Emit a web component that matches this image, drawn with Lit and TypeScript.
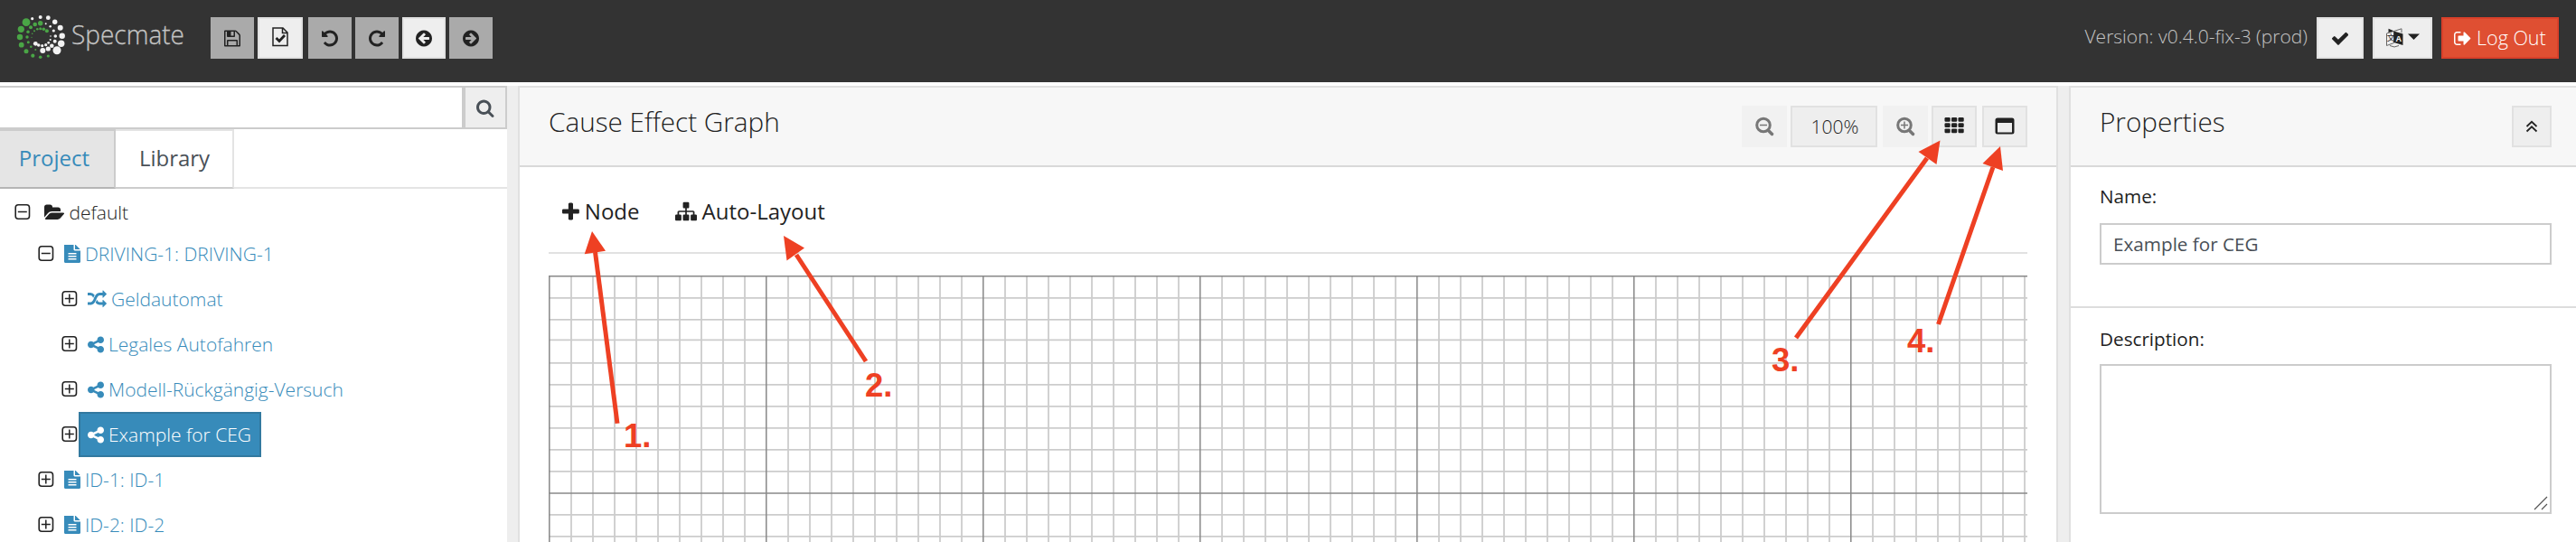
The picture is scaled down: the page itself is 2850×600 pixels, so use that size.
import { LitElement, html, svg, css, nothing } from "lit";
import { customElement } from "lit/decorators.js";

type Glyph = { w: number; d: string };
// Glyph outlines are drawn in a 1792-unit em with the y axis pointing down.
const G: Record<string, Glyph> = {
  undo: { w: 1536, d: "M1536 896q0 156-61 298t-164 245-245 164-298 61q-172 0-327-72.500t-264-204.500q-7-10-6.500-22.500t8.500-20.500l137-138q10-9 25-9 16 2 23 12 73 95 179 147t225 52q104 0 198.500-40.500t163.500-109.500 109.500-163.500 40.500-198.500-40.500-198.500-109.500-163.500-163.500-109.500-198.500-40.500q-98 0-188 35.500t-160 101.500l137 138q31 30 14 69-17 40-59 40h-448q-26 0-45-19t-19-45v-448q0-42 40-59 39-17 69 14l130 129q107-101 244.500-156.500t284.500-55.500q156 0 298 61t245 164 164 245 61 298z" },
  left: { w: 1536, d: "M1280 960v-128q0-26-19-45t-45-19h-502l189-189q19-19 19-45t-19-45l-91-91q-18-18-45-18t-45 18l-362 362-91 91q-18 18-18 45t18 45l91 91 362 362q18 18 45 18t45-18l91-91q18-18 18-45t-18-45l-189-189h502q26 0 45-19t19-45zM1536 896q0 209-103 385.500t-279.500 279.500-385.500 103-385.500-103-279.500-279.500-103-385.500 103-385.500 279.500-279.500 385.500-103 385.500 103 279.500 279.500 103 385.500z" },
  floppy: { w: 1536, d: "M384 1536h768v-384h-768v384zM1280 1536h128v-896q0-14-10-38.500t-20-34.500l-281-281q-10-10-34-20t-39-10v416q0 40-28 68t-68 28h-576q-40 0-68-28t-28-68v-416h-128v1280h128v-416q0-40 28-68t68-28h832q40 0 68 28t28 68v416zM896 608v-320q0-13-9.500-22.500t-22.500-9.500h-192q-13 0-22.500 9.500t-9.500 22.500v320q0 13 9.500 22.500t22.500 9.500h192q13 0 22.500-9.500t9.500-22.500zM1536 640v928q0 40-28 68t-68 28h-1344q-40 0-68-28t-28-68v-1344q0-40 28-68t68-28h928q40 0 88 20t76 48l280 280q28 28 48 76t20 88z" },
  search: { w: 1664, d: "M1152 832q0-185-131.500-316.500t-316.500-131.500-316.500 131.500-131.500 316.500 131.500 316.500 316.500 131.500 316.500-131.500 131.500-316.500zM1664 1664q0 52-38 90t-90 38q-54 0-90-38l-343-342q-179 124-399 124-143 0-273.500-55.500t-225-150-150-225-55.500-273.500 55.500-273.500 150-225 225-150 273.500-55.500 273.500 55.500 225 150 150 225 55.500 273.500q0 220-124 399l343 343q37 37 37 90z" },
  folder: { w: 1920, d: "M1879 952q0 31-31 66l-336 396q-43 51-120.500 86.500t-143.500 35.500h-1088q-34 0-60.500-13t-26.500-43q0-31 31-66l336-396q43-51 120.500-86.500t143.500-35.500h1088q34 0 60.500 13t26.500 43zM1536 608v160h-832q-94 0-197 47.500t-164 119.500l-337 396-5 6q0-4-.5-12.500t-.5-12.500v-960q0-92 66-158t158-66h320q92 0 158 66t66 158v32h544q92 0 158 66t66 158z" },
  file: { w: 1536, d: "M1468 380q14 14 28 36h-472v-472q22 14 36 28zM992 544h544v1056q0 40-28 68t-68 28h-1344q-40 0-68-28t-28-68v-1600q0-40 28-68t68-28h800v544q0 40 28 68t68 28zM1152 1376v-64q0-14-9-23t-23-9h-704q-14 0-23 9t-9 23v64q0 14 9 23t23 9h704q14 0 23-9t9-23zM1152 1120v-64q0-14-9-23t-23-9h-704q-14 0-23 9t-9 23v64q0 14 9 23t23 9h704q14 0 23-9t9-23zM1152 864v-64q0-14-9-23t-23-9h-704q-14 0-23 9t-9 23v64q0 14 9 23t23 9h704q14 0 23-9t9-23z" },
  random: { w: 1792, d: "M666 481q-60 92-137 273-22-45-37-72.500t-40.500-63.500-51-56.500-63-35-81.500-14.500h-224q-14 0-23-9t-9-23v-192q0-14 9-23t23-9h224q250 0 410 225zM1792 1280q0 14-9 23l-320 320q-9 9-23 9-13 0-22.500-9.500t-9.500-22.500v-192q-32 0-85 .5t-81 1-73-1-71-5-64-10.500-63-18.500-58-28.500-59-40-55-53.500-56-69.500q59-93 136-273 22 45 37 72.500t40.500 63.500 51 56.500 63 35 81.500 14.500h256v-192q0-14 9-23t23-9q12 0 24 10l319 319q9 9 9 23zM1792 384q0 14-9 23l-320 320q-9 9-23 9-13 0-22.500-9.500t-9.500-22.500v-192h-256q-48 0-87 15t-69 45-51 61.500-45 77.500q-32 62-78 171-29 66-49.500 111t-54 105-64 100-74 83-90 68.500-106.500 42-128 16.500h-224q-14 0-23-9t-9-23v-192q0-14 9-23t23-9h224q48 0 87-15t69-45 51-61.500 45-77.500q32-62 78-171 29-66 49.500-111t54-105 64-100 74-83 90-68.500 106.500-42 128-16.500h256v-192q0-14 9-23t23-9q12 0 24 10l319 319q9 9 9 23z" },
  share: { w: 1536, d: "M1216 1024q133 0 226.500 93.500t93.500 226.500-93.500 226.500-226.500 93.500-226.500-93.500-93.500-226.500q0-12 2-34l-360-180q-92 86-218 86-133 0-226.500-93.500t-93.500-226.500 93.500-226.500 226.500-93.500q126 0 218 86l360-180q-2-22-2-34 0-133 93.500-226.500t226.500-93.500 226.500 93.500 93.500 226.500-93.500 226.500-226.500 93.500q-126 0-218-86l-360 180q2 22 2 34t-2 34l360 180q92-86 218-86z" },
  plus: { w: 1408, d: "M1408 800v192q0 40-28 68t-68 28h-416v416q0 40-28 68t-68 28h-192q-40 0-68-28t-28-68v-416h-416q-40 0-68-28t-28-68v-192q0-40 28-68t68-28h416v-416q0-40 28-68t68-28h192q40 0 68 28t28 68v416h416q40 0 68 28t28 68z" },
  sitemap: { w: 1792, d: "M1792 1248v320q0 40-28 68t-68 28h-320q-40 0-68-28t-28-68v-320q0-40 28-68t68-28h96v-192h-512v192h96q40 0 68 28t28 68v320q0 40-28 68t-68 28h-320q-40 0-68-28t-28-68v-320q0-40 28-68t68-28h96v-192h-512v192h96q40 0 68 28t28 68v320q0 40-28 68t-68 28h-320q-40 0-68-28t-28-68v-320q0-40 28-68t68-28h96v-192q0-52 38-90t90-38h512v-192h-96q-40 0-68-28t-28-68v-320q0-40 28-68t68-28h320q40 0 68 28t28 68v320q0 40-28 68t-68 28h-96v192h512q52 0 90 38t38 90v192h96q40 0 68 28t28 68z" },
  check: { w: 1550, d: "M1550 560q0 40-28 68l-724 724-136 136q-28 28-68 28t-68-28l-136-136-362-362q-28-28-28-68t28-68l136-136q28-28 68-28t68 28l294 295 656-657q28-28 68-28t68 28l136 136q28 28 28 68z" },
  signout: { w: 1600, d: "M640 1440q0 4 1 20t.5 26.500-3 23.500-10 19.500-20.500 6.500h-320q-119 0-203.500-84.500t-84.500-203.500v-704q0-119 84.500-203.500t203.500-84.500h320q13 0 22.500 9.500t9.500 22.500q0 4 1 20t.5 26.500-3 23.500-10 19.500-20.500 6.500h-320q-66 0-113 47t-47 113v704q0 66 47 113t113 47h312l11.500 1 11.500 3 8 5.500 7 9 2 13.500zM1568 896q0 26-19 45l-544 544q-19 19-45 19t-45-19-19-45v-288h-448q-26 0-45-19t-19-45v-384q0-26 19-45t45-19h448v-288q0-26 19-45t45-19 45 19l544 544q19 19 19 45z" },
};

/** Draws one glyph so that 1792 units cover `size` pixels. */
const icon = (name: string, size = 21, flip = false) => {
  const g = G[name];
  return html`<svg class="ic" width=${(g.w / 1792) * size} height=${size} viewBox="0 0 ${g.w} 1792">
    <path fill="currentColor" fill-rule="evenodd" transform=${flip ? `translate(${g.w} 0) scale(-1 1)` : ""} d=${g.d}></path></svg>`;
};

const box = (open: boolean) => html`<svg class="box" width="18" height="18" viewBox="0 0 18 18">
  <rect x="1.200" y="0.800" width="15.300" height="15.500" rx="3" fill="none" stroke="#222" stroke-width="1.600"></rect>
  <path d=${open ? "M3.800 8.500h10" : "M3.800 8.500h10M8.800 3.500v10"} stroke="#222" stroke-width="1.500"></path></svg>`;

// White and green dots of the brand mark: x, y, radius.
const WHITE: number[][] = [
  [35.7, 20.7, 1.6], [44.7, 18.9, 2], [53.3, 19.7, 2.4], [60.7, 24.3, 2.7], [66.7, 30.7, 3], [68.7, 39.7, 3.2], [67.7, 48.3, 3.7], [63, 55.7, 4.5],
  [57.3, 50.7, 2.3], [53.3, 54, 2.6], [47.3, 56, 3], [60.7, 45.7, 2], [61.3, 40, 1.8], [59.3, 34, 1.6], [55.7, 29.3, 1.3], [50.7, 26.3, 1],
  [39.3, 48.3, 2.4], [42.7, 50, 1.8], [46.7, 50.7, 1.6], [50.7, 49.7, 1.6], [53.7, 47.3, 1.4], [55.7, 44, 1.1], [56, 40, 0.8],
];
const GREEN: number[][] = [
  [29, 24.7, 4.4], [23.3, 32.3, 3.6], [22, 41, 3.2], [23.7, 49.7, 2.9], [29, 56.7, 2.5], [36.3, 61.7, 2.1], [44.7, 63.3, 1.8], [53.3, 62, 1.6],
  [44.7, 25.7, 2.7], [38.7, 27, 2.3], [34, 30.3, 2], [31, 35.3, 1.7], [30, 41, 1.7], [31.3, 46.7, 1.5], [34.3, 51.7, 1.3], [39.3, 55, 1],
  [51.9, 34.3, 2], [48.3, 32.3, 1.8], [44.7, 31.7, 1.5], [41.3, 32.3, 1.3], [38, 34.3, 1], [35.7, 37.3, 0.8], [35, 41.3, 0.6],
];

const VX = Array.from({ length: 69 }, (_, i) => i);
const HY = [0.8, 24.8, 48.8, 71.3, 96.8, 120.8, 144.8, 168.8, 192.8, 216.8, 241, 264.8, 288.8];

const ARROWS = [
  { line: "683,468.700 658.500,279", head: "655,256 670,277.700 646.700,281.300" },
  { line: "958,400 881,282", head: "867,261 890,274.500 870.500,288.500" },
  { line: "1987,374 2132,175", head: "2146.500,155.500 2142.500,182 2122.500,168" },
  { line: "2144.500,359 2205,185", head: "2213,162 2216,189 2193.500,181" },
];
const LABELS = [["1.", 690, 495], ["2.", 957, 439], ["3.", 1960, 411], ["4.", 2110, 389.5]] as const;

const TREE = [
  { depth: 0, open: true, icon: "folder", text: "default", kind: "root" },
  { depth: 1, open: true, icon: "file", text: "DRIVING-1: DRIVING-1", kind: "" },
  { depth: 2, open: false, icon: "random", text: "Geldautomat", kind: "" },
  { depth: 2, open: false, icon: "share", text: "Legales Autofahren", kind: "" },
  { depth: 2, open: false, icon: "share", text: "Modell-Rückgängig-Versuch", kind: "" },
  { depth: 2, open: false, icon: "share", text: "Example for CEG", kind: "sel" },
  { depth: 1, open: false, icon: "file", text: "ID-1: ID-1", kind: "" },
  { depth: 1, open: false, icon: "file", text: "ID-2: ID-2", kind: "" },
];

@customElement("app-root")
export class AppRoot extends LitElement {
  static styles = css`
    :host { display: block; position: relative; width: 2850px; height: 600px; overflow: hidden; background: #fff; color: #222; font: 300 21px/32px "Open Sans", sans-serif; }
    * { box-sizing: border-box; }
    svg { display: block; flex: none; }
    .bar { height: 91px; background: #333; display: flex; align-items: flex-start; padding: 0 19px 0 0; }
    .logo { width: 233px; height: 91px; }
    .wordmark { font: 300 29.500px "Open Sans", sans-serif; fill: #c4c4c4; stroke: #c4c4c4; stroke-width: .3px; }
    .btn { height: 46px; margin-top: 19px; display: flex; align-items: center; justify-content: center; background: #eee; border: 2px solid #e1e1e1; white-space: nowrap; }
    .tool { width: 48px; margin-right: 4px; }
    .off { background: #aaa; border-color: #aaa; }
    .wide { width: 50px; margin-right: 6px; padding-bottom: 3px; }
    .version { margin: 24px 10px 0 auto; color: #c4c4c4; white-space: nowrap; }
    .verify { width: 52px; margin-right: 10px; }
    .lang { width: 66px; margin-right: 10px; gap: 5px; }
    .logout { width: 130px; background: #df4f32; border-color: #d9402a; color: #fff; gap: 6px; font-size: 21.500px; font-weight: 350; }
    .body { margin-top: 4px; height: 505px; display: grid; grid-template-columns: 561px 1704px 561px; column-gap: 12px; background: #eee; }
    .side { background: #fff; }
    .find { display: flex; height: 48px; border: solid #ccc; border-width: 2px 2px 2px 0; }
    .field { width: 515px; border-right: 4px solid #ccc; }
    .go { flex: 1; background: #eee; color: #495057; display: flex; align-items: center; justify-content: center; }
    .tabs { display: flex; height: 66px; border-bottom: 2px solid #e4e4e4; font-size: 24px; font-weight: 400; }
    .tab { height: 66px; display: flex; align-items: center; justify-content: center; border: 2px solid #e4e4e4; border-left: 0; border-bottom-color: #ccc; color: #495057; padding-bottom: 3px; }
    .active { width: 128px; background: #e5e5e5; color: #378bba; border-color: #ccc; border-bottom-color: #b5b5b5; padding-right: 6px; }
    .second { width: 131px; padding-left: 1px; }
    .tree { padding-top: 1px; }
    .row { height: 50px; display: flex; align-items: center; color: #378bba; }
    .first { color: #222; height: 50px; }
    .d0 { padding-left: 16px; } .d1 { padding-left: 42px; } .d2 { padding-left: 68px; }
    .first + .row { height: 46px; padding-bottom: 4px; }
    .item { display: flex; align-items: center; height: 50px; gap: 5px; padding: 0 9px 0 8px; margin-left: 1px; border: 2px solid transparent; white-space: nowrap; }
    .d0 .item { padding-left: 12px; }
    .row .sel { background: #378bba; border-color: #32799f; color: #fff; }
    .panel { background: #fff; border: 2px solid #e0e0e0; border-bottom: 0; min-width: 0; }
    .props { border-right: 0; }
    .head { height: 88px; background: #f7f7f7; border-bottom: 2px solid #d9d9d9; display: flex; align-items: flex-start; padding: 20px 30px 0 32px; }
    .props .head { padding-right: 27px; }
    h1 { margin: 2px auto 0 0; font-size: 29.700px; line-height: 32px; font-weight: 300; white-space: nowrap; }
    .head .btn { margin-top: 0; }
    .zoom { width: 50px; background: #f1f1f1; border-color: #f1f1f1; color: #777; }
    .pct { width: 96px; margin: 0 6px 0 4px; padding-left: 2px; }
    .sq { width: 50px; margin-left: 4px; }
    .sq + .sq { margin: 0 2px 0 6px; }
    .up { width: 44px; }
    .actions { height: 96px; margin: 0 32px; border-bottom: 2px solid #e1e1e1; display: flex; padding: 33px 0 0 15px; gap: 39px; font-size: 24px; font-weight: 400; }
    .act { display: flex; align-items: center; height: 32px; gap: 6px; white-space: nowrap; }
    .canvas { margin: 24px 32px 0; }
    .form { padding: 16px 0 0 32px; font-weight: 400; font-size: 20.700px; }
    .form + .form { border-top: 2px solid #ddd; padding-top: 18px; }
    .input { width: 500px; height: 46px; border: 2px solid #ccc; color: #495057; margin: 14px 0 46px; padding: 5px 13px; font-size: 20.700px; }
    .area { width: 500px; height: 166px; border: 2px solid #ccc; margin-top: 12px; display: flex; align-items: flex-end; justify-content: flex-end; padding: 2px; }
    .overlay { position: absolute; left: 0; top: 0; pointer-events: none; }
    .num { font: 700 36.500px "Liberation Sans", sans-serif; fill: #ee4023; }
    .letter { font: 700 9px "Liberation Sans", sans-serif; fill: #fff; }
    .han { font: 400 9px "Noto Sans CJK SC", sans-serif; fill: #222; }
  `;

  private header() {
    return html`<header class="bar">
      <svg class="logo" viewBox="0 0 233 91">
        ${WHITE.map(([x, y, r]) => svg`<circle cx=${x} cy=${y} r=${r} fill="#f2f2f2"></circle>`)}
        ${GREEN.map(([x, y, r]) => svg`<circle cx=${x} cy=${y} r=${r} fill="#4aa546"></circle>`)}
        <text class="wordmark" x="79" y="48.500" textLength="125" lengthAdjust="spacingAndGlyphs">Specmate</text>
      </svg>
      <div class="btn tool off">${icon("floppy")}</div>
      <div class="btn wide"><svg width="18" height="24" viewBox="0 0 18 24" fill="none" stroke="#222" stroke-width="1.500"><path d="M1 2h11l5 5v14.500h-16zM11.500 2v5.500h5.500"></path><path d="M4.500 13l3.500 3.500 6-6.500" stroke-width="2.800"></path></svg></div>
      <div class="btn tool off">${icon("undo")}</div>
      <div class="btn tool off">${icon("undo", 21, true)}</div>
      <div class="btn tool">${icon("left")}</div>
      <div class="btn tool off">${icon("left", 21, true)}</div>
      <div class="version">Version: v0.4.0-fix-3 (prod)</div>
      <div class="btn verify">${icon("check")}</div>
      <div class="btn lang">
        <svg width="19" height="22" viewBox="0 0 19 22">
          <path d="M.5 6l8-2.500v13l-8 3zM8.500 3.500l8.500-2.700v4.500" fill="none" stroke="#666"></path>
          <path d="M2.500 .8l6 2.500-6 1.700zM8.500 3.500l10 3v12.500l-10-3z" fill="#222"></path>
          <text class="han" x="0.800" y="14" textLength="7.500">文</text><text class="letter" x="10.500" y="14.500">A</text>
          <path d="M4 19.500q5 3 10 0" fill="none" stroke="#666"></path></svg>
        <svg width="13" height="10" viewBox="0 0 13 10"><path d="M0 0.500h13l-6.500 6.500z" fill="#222"></path></svg>
      </div>
      <div class="btn logout">${icon("signout")}<span>Log Out</span></div>
    </header>`;
  }

  private sidebar() {
    return html`<aside class="side">
      <div class="find"><div class="field"></div><div class="go">${icon("search", 21)}</div></div>
      <div class="tabs"><div class="tab active">Project</div><div class="tab second">Library</div></div>
      <div class="tree">${TREE.map((t) => html`<div class="row d${t.depth} ${t.kind === "root" ? "first" : ""}">
        ${box(t.open)}<div class="item ${t.kind === "sel" ? "sel" : ""}">${icon(t.icon)}<span>${t.text}</span></div></div>`)}</div>
    </aside>`;
  }

  private zoomIcon(plus: boolean) {
    return html`<svg width="22" height="22" viewBox="0 0 22 22" fill="none" stroke="currentColor"><circle cx="10" cy="9.500" r="7.300" stroke-width="3"></circle>
      <path d="M15.500 15.500l4 4" stroke-width="3.500" stroke-linecap="round"></path><path d=${plus ? "M6 9.500h8M10 5.500v8" : "M6 9.500h8"} stroke-width="1.500"></path></svg>`;
  }

  render() {
    return html`${this.header()}
      <div class="body">
        ${this.sidebar()}
        <main class="panel">
          <div class="head"><h1>Cause Effect Graph</h1>
            <div class="btn zoom">${this.zoomIcon(false)}</div><div class="btn pct">100%</div><div class="btn zoom">${this.zoomIcon(true)}</div>
            <div class="btn sq"><svg width="22" height="20" viewBox="0 0 22 20" fill="#222">${[0, 1, 2].map((r) => [0, 1, 2].map((c) => svg`<rect x=${0.5 + c * 7.5} y=${r * 6.2} width="6.200" height="4.800" rx="1.200"></rect>`))}</svg></div>
            <div class="btn sq"><svg width="22" height="20" viewBox="0 0 22 20"><path fill="#222" fill-rule="evenodd" d="M3 0.500h16q2.500 0 2.500 2.500v13q0 2.500-2.500 2.500h-16q-2.500 0-2.500-2.500v-13q0-2.500 2.500-2.500zM3 6v10.500h16v-10.500z"></path></svg></div>
          </div>
          <div class="actions"><div class="act">${icon("plus", 24)}<span>Node</span></div><div class="act">${icon("sitemap", 24)}<span>Auto-Layout</span></div></div>
          <svg class="canvas" width="1636" height="295" viewBox="0 0 1636 295">
            ${VX.map((i) => i % 10 ? svg`<path d="M${i * 24 + 1} 0V295" stroke="#ccc" stroke-width="1.800"></path>` : nothing)}
            ${HY.map((y, i) => i % 10 ? svg`<path d="M0 ${y}H1636" stroke="#ccc" stroke-width="1.800"></path>` : nothing)}
            ${VX.map((i) => i % 10 ? nothing : svg`<path d="M${i * 24 + 0.8} 0V295" stroke="#888" stroke-width="1.500"></path>`)}
            ${HY.map((y, i) => i % 10 ? nothing : svg`<path d="M0 ${y}H1636" stroke="#888" stroke-width="1.500"></path>`)}
          </svg>
        </main>
        <section class="panel props">
          <div class="head"><h1>Properties</h1><div class="btn up"><svg width="14" height="14" viewBox="0 0 14 14" fill="none" stroke="#222" stroke-width="1.800"><path d="M1.500 7L7 1.800l5.500 5.200M1.500 12.500L7 7.300l5.500 5.200"></path></svg></div></div>
          <div class="form">Name:<div class="input">Example for CEG</div></div>
          <div class="form">Description:<div class="area"><svg width="16" height="16" viewBox="0 0 16 16"><path d="M1 15L15 1M9 15L15 9" stroke="#555" stroke-width="1.200"></path></svg></div></div>
        </section>
      </div>
      <svg class="overlay" width="2850" height="600" viewBox="0 0 2850 600">
        ${ARROWS.map((a) => svg`<polyline points=${a.line} stroke="#ee4023" stroke-width="5" fill="none"></polyline><polygon points=${a.head} fill="#ee4023"></polygon>`)}
        ${LABELS.map(([t, x, y]) => svg`<text class="num" x=${x} y=${y}>${t}</text>`)}
      </svg>`;
  }
}
